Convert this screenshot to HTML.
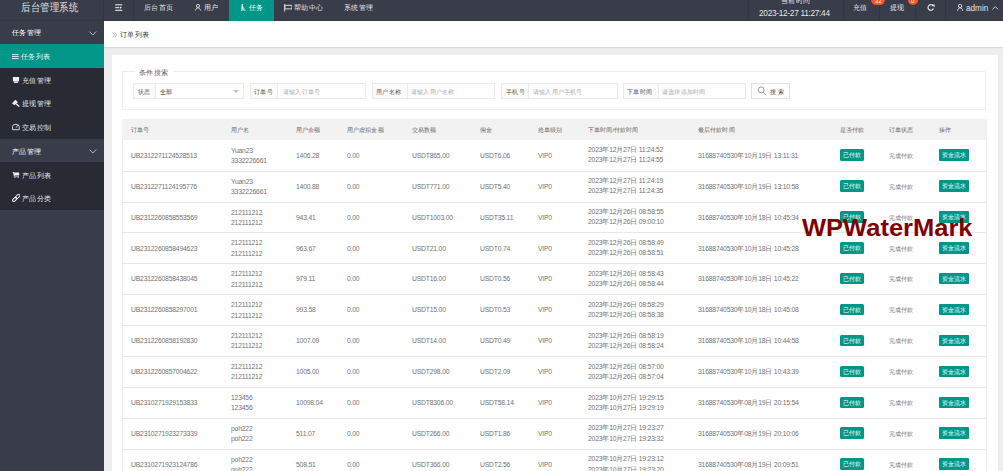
<!DOCTYPE html>
<html><head><meta charset="utf-8"><style>
*{margin:0;padding:0;box-sizing:border-box}
html,body{width:1003px;height:471px;overflow:hidden;background:#eeeeee;font-family:"Liberation Sans",sans-serif;position:relative}
.a{position:absolute;white-space:nowrap}
.z{position:absolute;white-space:nowrap;line-height:1;transform-origin:0 0;transform:scale(.1) translateY(-50%)}
#hdr{position:absolute;left:0;top:0;width:1003px;height:21px;background:#393D49;border-bottom:1px solid #363945}
.vd{position:absolute;top:0;height:21px;width:1px;background:#33363f}
#side{position:absolute;left:0;top:21px;width:104px;height:450px;background:#393D49}
.sg{position:absolute;left:0;width:104px;background:#282B33}
.si{position:absolute;left:0;width:104px}
#bc{position:absolute;left:104px;top:21px;width:899px;height:26px;background:#fff;box-shadow:0 1px 1px rgba(0,0,0,.08)}
#card{position:absolute;left:112px;top:55px;width:886px;height:500px;background:#fff}
#fs{position:absolute;left:122.3px;top:71.4px;width:864px;height:39px;border:1px solid #eee}
.ib{position:absolute;top:83.3px;height:16.2px;border:1px solid #eaeaea;background:#fff}
.il{position:absolute;left:0;top:0;bottom:0;background:#fbfbfb;border-right:1px solid #eaeaea}
.thead{position:absolute;left:122.4px;top:119px;width:863.6px;height:20.7px;background:#f2f2f2}
#tbl{position:absolute;left:122.4px;top:119px;width:864.2px;height:400px;border-left:1px solid #ececec;border-right:1px solid #f0f0f0}
.rline{position:absolute;left:122.4px;width:864.2px;height:1px;background:#e9e9e9}
.badge{position:absolute;width:24.2px;height:11.7px;background:#009688;border-radius:1.5px}
.btn{position:absolute;width:29.6px;height:11.7px;background:#009688;border-radius:1px}
.wm{position:absolute;left:802.2px;top:216.7px;font-family:"Liberation Sans",sans-serif;font-weight:bold;font-size:23.2px;line-height:1;color:#800000;white-space:nowrap;transform:scaleX(1.1);transform-origin:0 0}

</style></head><body>
<div id="hdr">
<div class="z" style="left:21.30px;top:7.25px;font-size:95.0px;color:rgba(255,255,255,.88);font-weight:500;transform:scale(.1,.118) translateY(-50%);">后台管理系统</div>
<div class="vd" style="left:103.3px"></div><div class="vd" style="left:133.3px"></div>
<svg class="a" style="left:114.8px;top:4px" width="8" height="8" viewBox="0 0 8 8"><g fill="#e6e6e6"><rect x="0.2" y="0.3" width="7" height="1.1"/><rect x="0.2" y="3.1" width="4.2" height="1.1"/><path d="M5 2.6 L7.2 3.65 L5 4.7Z"/><rect x="0.2" y="5.8" width="7" height="1.1"/></g></svg>
<div class="z" style="left:143.80px;top:7.00px;font-size:74.0px;color:rgba(255,255,255,.9);font-weight:500;">后台首页</div>
<svg class="a" style="left:195px;top:4.4px" width="7" height="7" viewBox="0 0 7 7"><g fill="none" stroke="#e6e6e6" stroke-width="0.9"><circle cx="3" cy="2" r="1.6"/><path d="M0.5 6.5 C0.9 4.6 1.8 3.9 3 3.9 C4.2 3.9 5.1 4.6 5.5 6.5"/></g></svg>
<div class="z" style="left:204.40px;top:7.00px;font-size:74.0px;color:rgba(255,255,255,.9);font-weight:500;">用户</div>
<div style="position:absolute;left:229.1px;top:0;width:44.5px;height:21px;background:#009688"></div>
<svg class="a" style="left:240px;top:4.2px" width="6" height="7" viewBox="0 0 6 7"><g fill="#e8f5f3"><circle cx="2.3" cy="0.9" r="0.9"/><path d="M1.5 2 L3 2 L3.3 4.2 L4.8 6.8 L4.1 6.9 L2.6 4.8 L2.3 6.9 L1.3 6.9 L1.5 4.2Z"/></g><path d="M3 2.6 L5.6 6.8" stroke="#e8f5f3" stroke-width="0.5"/></svg>
<div class="z" style="left:249.00px;top:7.00px;font-size:74.0px;color:#fff;font-weight:500;">任务</div>
<svg class="a" style="left:283.8px;top:4px" width="8.5" height="7.5" viewBox="0 0 8.5 7.5"><g fill="none" stroke="#e6e6e6" stroke-width="0.9"><path d="M0.6 0 L0.6 7.5"/><rect x="0.9" y="1.3" width="7" height="3.6"/></g></svg>
<div class="z" style="left:294.00px;top:7.00px;font-size:74.0px;color:rgba(255,255,255,.9);font-weight:500;">帮助中心</div>
<div class="z" style="left:343.80px;top:7.00px;font-size:74.0px;color:rgba(255,255,255,.9);font-weight:500;">系统管理</div>
<div class="vd" style="left:747.5px"></div>
<div class="vd" style="left:842.8px"></div>
<div class="vd" style="left:879.3px"></div>
<div class="vd" style="left:915.4px"></div>
<div class="vd" style="left:945.4px"></div>
<div class="z" style="left:780.50px;top:-0.20px;font-size:73.0px;color:rgba(255,255,255,.9);font-weight:500;">当前时间</div>
<div class="z" style="left:758.80px;top:13.30px;font-size:83.0px;color:rgba(255,255,255,.9);letter-spacing:-3.00px;">2023-12-27 11:27:44</div>
<div class="z" style="left:853.00px;top:7.00px;font-size:74.0px;color:rgba(255,255,255,.9);font-weight:500;">充值</div>
<div style="position:absolute;left:871px;top:-5.8px;width:14px;height:11.2px;border-radius:5.6px;background:#FF5722"></div>
<div class="z" style="left:875.00px;top:0.50px;font-size:60.0px;color:#fff;">32</div>
<div class="z" style="left:889.60px;top:7.00px;font-size:74.0px;color:rgba(255,255,255,.9);font-weight:500;">提现</div>
<div style="position:absolute;left:907.8px;top:-5px;width:10.2px;height:10.2px;border-radius:5.1px;background:#FF5722"></div>
<div class="z" style="left:911.30px;top:1.00px;font-size:60.0px;color:#fff;">0</div>
<svg class="a" style="left:926.6px;top:4.2px" width="8" height="7" viewBox="0 0 8 7"><g fill="none" stroke="#e6e6e6" stroke-width="1.2"><path d="M6.3 2.2 A2.8 2.8 0 1 0 6.4 4.6"/></g><path d="M4.6 0.4 L7.6 0.4 L7.6 3.3Z" fill="#e6e6e6"/></svg>
<svg class="a" style="left:957px;top:4.2px" width="7" height="7" viewBox="0 0 7 7"><g fill="none" stroke="#e6e6e6" stroke-width="0.9"><circle cx="3.1" cy="2" r="1.7"/><path d="M0.5 6.8 C0.9 4.8 1.8 3.9 3.1 3.9 C4.4 3.9 5.3 4.8 5.7 6.8"/></g></svg>
<div class="z" style="left:966.00px;top:7.90px;font-size:82.0px;color:rgba(255,255,255,.9);">admin</div>
<svg class="a" style="left:992px;top:6px" width="7" height="4" viewBox="0 0 7 4"><path d="M0.4 3.4 L3.3 0.6 L6.2 3.4" fill="none" stroke="#d6d6d6" stroke-width="0.9"/></svg>
</div>
<div id="side"><div style="position:absolute;left:0;top:-0.7px;width:104px;height:10px">
<div class="z" style="left:12.20px;top:11.40px;font-size:73.0px;color:#fff;font-weight:500;">任务管理</div>
<svg class="a" style="left:88.8px;top:10.6px" width="8" height="5" viewBox="0 0 8 5"><path d="M0.5 0.6 L3.8 4 L7.1 0.6" fill="none" stroke="#d8d8d8" stroke-width="0.8"/></svg>
<div class="sg" style="top:23.6px;height:165.6px"></div>
<div class="si" style="top:23.6px;height:23.9px;background:#009688"></div>
<svg class="a" style="left:11.9px;top:33.6px" width="7" height="6" viewBox="0 0 7 6"><g fill="#f0f0f0"><rect x="0" y="0.2" width="6.6" height="0.9"/><rect x="0" y="2.1" width="6.6" height="0.9"/><rect x="0" y="4" width="6.6" height="0.9"/></g></svg>
<div class="z" style="left:21.20px;top:35.20px;font-size:73.0px;color:#f4f4f4;font-weight:500;">任务列表</div>
<svg class="a" style="left:9px;top:53.7px" width="14" height="14" viewBox="0 0 14 14"><g fill="#f0f0f0"><rect x="3.9" y="3" width="6.2" height="4.4"/><path d="M5.6 7.4 L8.4 7.4 L9.4 9 L4.6 9Z"/></g></svg>
<div class="z" style="left:22.30px;top:59.90px;font-size:73.0px;color:rgba(255,255,255,.92);font-weight:500;">充值管理</div>
<svg class="a" style="left:9px;top:76.7px" width="14" height="14" viewBox="0 0 14 14"><g fill="#f0f0f0"><path d="M3 6.25 L6.55 2.83 L8.93 5.36 L5.36 8.33Z"/><path d="M6.6 7.3 L7.6 6.3 L10.8 9.1 L9.8 10.1Z"/></g></svg>
<div class="z" style="left:22.30px;top:82.50px;font-size:73.0px;color:rgba(255,255,255,.92);font-weight:500;">提现管理</div>
<svg class="a" style="left:9px;top:100.7px" width="14" height="14" viewBox="0 0 14 14"><g fill="none" stroke="#e8e8e8" stroke-width="0.9"><path d="M3.5 8.7 L3.5 5.6 Q3.5 3.3 6.9 3.3 Q10.2 3.3 10.2 5.6 L10.2 8.7 Z"/><path d="M6.7 6.7 L9.2 4.3"/></g></svg>
<div class="z" style="left:22.30px;top:106.80px;font-size:73.0px;color:rgba(255,255,255,.92);font-weight:500;">交易控制</div>
<div class="si" style="top:118.5px;height:23.3px;background:#393D49"></div>
<div class="z" style="left:12.30px;top:130.30px;font-size:73.0px;color:#fff;font-weight:500;">产品管理</div>
<svg class="a" style="left:88.8px;top:128.4px" width="8" height="5" viewBox="0 0 8 5"><path d="M0.5 0.6 L3.8 4 L7.1 0.6" fill="none" stroke="#d8d8d8" stroke-width="0.8"/></svg>
<svg class="a" style="left:9px;top:147.7px" width="14" height="14" viewBox="0 0 14 14"><g fill="#f0f0f0"><path d="M3.3 3.9 L4.8 3.9 L5.2 4.6 L10.2 4.6 L10.2 7.2 L5.6 7.2 L5.6 7.8 L10 7.8 L10 8.5 L4.8 8.5 L4.3 5Z"/><circle cx="6" cy="9.3" r="0.6"/><circle cx="9.1" cy="9.3" r="0.6"/></g></svg>
<div class="z" style="left:21.60px;top:154.40px;font-size:73.0px;color:rgba(255,255,255,.92);font-weight:500;">产品列表</div>
<svg class="a" style="left:11.8px;top:173.8px" width="8.4" height="8" viewBox="0 0 8.4 8"><g fill="none" stroke="#ececec" stroke-width="1"><rect x="0.2" y="4.1" width="5" height="2.6" rx="1.3" transform="rotate(-45 2.7 5.4)"/><rect x="3.2" y="1.2" width="5" height="2.6" rx="1.3" transform="rotate(-45 5.7 2.5)"/></g></svg>
<div class="z" style="left:21.60px;top:177.80px;font-size:73.0px;color:rgba(255,255,255,.92);font-weight:500;">产品分类</div>
</div></div>
<div id="bc"></div>
<svg class="a" style="left:111.9px;top:31.8px" width="6" height="6" viewBox="0 0 6 6"><g fill="none" stroke="#999" stroke-width="0.7"><path d="M0.4 0.6 L2.6 3 L0.4 5.4"/><path d="M2.6 0.6 L4.8 3 L2.6 5.4"/></g></svg>
<div class="z" style="left:120.00px;top:34.30px;font-size:73.0px;color:#333;">订单列表</div>
<div id="card"></div><div id="fs"></div>
<div class="a" style="left:134.6px;top:68px;width:38px;height:8px;background:#fff"></div>
<div class="z" style="left:138.60px;top:71.90px;font-size:73.0px;color:#666;">条件搜索</div>
<div class="ib" style="left:133.4px;width:110.2px"><div class="il" style="width:22px"></div></div>
<div class="z" style="left:138.00px;top:91.90px;font-size:64.0px;color:#555;font-weight:500;">状态</div>
<div class="z" style="left:159.80px;top:91.90px;font-size:62.0px;color:#222;">全部</div>
<div style="position:absolute;left:232.6px;top:89.9px;border-left:3px solid transparent;border-right:3px solid transparent;border-top:3.1px solid #c2c2c2"></div>
<div class="ib" style="left:249.7px;width:116.6px"><div class="il" style="width:27.7px"></div></div>
<div class="z" style="left:254.00px;top:91.90px;font-size:64.0px;color:#555;font-weight:500;">订单号</div>
<div class="z" style="left:282.60px;top:91.90px;font-size:62.0px;color:#aaa;">请输入订单号</div>
<div class="ib" style="left:372px;width:122.6px"><div class="il" style="width:35px"></div></div>
<div class="z" style="left:376.00px;top:91.90px;font-size:64.0px;color:#555;font-weight:500;">用户名称</div>
<div class="z" style="left:411.00px;top:91.90px;font-size:62.0px;color:#aaa;">请输入用户名称</div>
<div class="ib" style="left:500.5px;width:117px"><div class="il" style="width:27.3px"></div></div>
<div class="z" style="left:505.60px;top:91.90px;font-size:64.0px;color:#555;font-weight:500;">手机号</div>
<div class="z" style="left:533.00px;top:91.90px;font-size:62.0px;color:#aaa;">请输入用户手机号</div>
<div class="ib" style="left:622.7px;width:123.1px"><div class="il" style="width:35px"></div></div>
<div class="z" style="left:627.00px;top:91.90px;font-size:64.0px;color:#555;font-weight:500;">下单时间</div>
<div class="z" style="left:661.60px;top:91.90px;font-size:62.0px;color:#aaa;">请选择添加时间</div>
<div class="ib" style="left:751.4px;width:38.2px;border-color:#e2e2e2"></div>
<svg class="a" style="left:757px;top:86.4px" width="10" height="10" viewBox="0 0 10 10"><g fill="none" stroke="#666" stroke-width="0.65"><circle cx="4.2" cy="3.95" r="3.0"/><path d="M6.3 6.1 L8.9 9.1"/></g></svg>
<div class="z" style="left:770.00px;top:91.90px;font-size:62.0px;color:#333;letter-spacing:18.00px;">搜索</div>
<div id="tbl"></div><div class="thead"></div>
<div class="z" style="left:131.40px;top:130.00px;font-size:61.0px;color:#666;font-weight:500;">订单号</div>
<div class="z" style="left:231.30px;top:130.00px;font-size:61.0px;color:#666;font-weight:500;">用户名</div>
<div class="z" style="left:295.50px;top:130.00px;font-size:61.0px;color:#666;font-weight:500;">用户余额</div>
<div class="z" style="left:347.40px;top:130.00px;font-size:61.0px;color:#666;font-weight:500;">用户虚拟金额</div>
<div class="z" style="left:412.40px;top:130.00px;font-size:61.0px;color:#666;font-weight:500;">交易数额</div>
<div class="z" style="left:480.20px;top:130.00px;font-size:61.0px;color:#666;font-weight:500;">佣金</div>
<div class="z" style="left:538.40px;top:130.00px;font-size:61.0px;color:#666;font-weight:500;">抢单级别</div>
<div class="z" style="left:588.00px;top:130.00px;font-size:61.0px;color:#666;font-weight:500;">下单时间/付款时间</div>
<div class="z" style="left:698.00px;top:130.00px;font-size:61.0px;color:#666;font-weight:500;">最后付款时间</div>
<div class="z" style="left:839.60px;top:130.00px;font-size:61.0px;color:#666;font-weight:500;">是否付款</div>
<div class="z" style="left:889.20px;top:130.00px;font-size:61.0px;color:#666;font-weight:500;">订单状态</div>
<div class="z" style="left:939.20px;top:130.00px;font-size:61.0px;color:#666;font-weight:500;">操作</div>
<div class="rline" style="top:170.63px"></div>
<div class="z" style="left:131.40px;top:155.76px;font-size:68.0px;color:#737373;letter-spacing:-2.00px;">UB2312271124528513</div>
<div class="z" style="left:231.30px;top:150.66px;font-size:68.0px;color:#737373;letter-spacing:-2.00px;">Yuan23</div>
<div class="z" style="left:231.30px;top:160.86px;font-size:68.0px;color:#737373;letter-spacing:-2.00px;">3332226661</div>
<div class="z" style="left:295.50px;top:155.76px;font-size:68.0px;color:#737373;letter-spacing:-2.00px;">1406.28</div>
<div class="z" style="left:347.40px;top:155.76px;font-size:68.0px;color:#737373;letter-spacing:-2.00px;">0.00</div>
<div class="z" style="left:412.40px;top:155.76px;font-size:68.0px;color:#737373;letter-spacing:-2.00px;">USDT865.00</div>
<div class="z" style="left:480.20px;top:155.76px;font-size:68.0px;color:#737373;letter-spacing:-2.00px;">USDT6.06</div>
<div class="z" style="left:538.40px;top:155.76px;font-size:68.0px;color:#737373;letter-spacing:-2.00px;">VIP0</div>
<div class="z" style="left:588.00px;top:150.06px;font-size:68.0px;color:#737373;letter-spacing:-2.00px;">2023<span style="font-size:68.0px;letter-spacing:0;font-weight:500">年</span>12<span style="font-size:68.0px;letter-spacing:0;font-weight:500">月</span>27<span style="font-size:68.0px;letter-spacing:0;font-weight:500">日</span> 11:24:52</div>
<div class="z" style="left:588.00px;top:160.36px;font-size:68.0px;color:#737373;letter-spacing:-2.00px;">2023<span style="font-size:68.0px;letter-spacing:0;font-weight:500">年</span>12<span style="font-size:68.0px;letter-spacing:0;font-weight:500">月</span>27<span style="font-size:68.0px;letter-spacing:0;font-weight:500">日</span> 11:24:55</div>
<div class="z" style="left:698.00px;top:155.76px;font-size:68.0px;color:#737373;letter-spacing:-2.00px;">31688740530<span style="font-size:68.0px;letter-spacing:0;font-weight:500">年</span>10<span style="font-size:68.0px;letter-spacing:0;font-weight:500">月</span>19<span style="font-size:68.0px;letter-spacing:0;font-weight:500">日</span> 13:11:31</div>
<div class="badge" style="left:839.5px;top:149.06px"></div>
<div class="z" style="left:842.60px;top:155.06px;font-size:61.0px;color:#fff;font-weight:500;">已付款</div>
<div class="z" style="left:889.20px;top:155.76px;font-size:61.0px;color:#737373;font-weight:500;">完成付款</div>
<div class="btn" style="left:939.2px;top:149.06px"></div>
<div class="z" style="left:942.20px;top:155.06px;font-size:60.0px;color:#fff;font-weight:500;">资金流水</div>
<div class="rline" style="top:201.56px"></div>
<div class="z" style="left:131.40px;top:186.69px;font-size:68.0px;color:#737373;letter-spacing:-2.00px;">UB2312271124195776</div>
<div class="z" style="left:231.30px;top:181.59px;font-size:68.0px;color:#737373;letter-spacing:-2.00px;">Yuan23</div>
<div class="z" style="left:231.30px;top:191.79px;font-size:68.0px;color:#737373;letter-spacing:-2.00px;">3332226661</div>
<div class="z" style="left:295.50px;top:186.69px;font-size:68.0px;color:#737373;letter-spacing:-2.00px;">1400.88</div>
<div class="z" style="left:347.40px;top:186.69px;font-size:68.0px;color:#737373;letter-spacing:-2.00px;">0.00</div>
<div class="z" style="left:412.40px;top:186.69px;font-size:68.0px;color:#737373;letter-spacing:-2.00px;">USDT771.00</div>
<div class="z" style="left:480.20px;top:186.69px;font-size:68.0px;color:#737373;letter-spacing:-2.00px;">USDT5.40</div>
<div class="z" style="left:538.40px;top:186.69px;font-size:68.0px;color:#737373;letter-spacing:-2.00px;">VIP0</div>
<div class="z" style="left:588.00px;top:181.00px;font-size:68.0px;color:#737373;letter-spacing:-2.00px;">2023<span style="font-size:68.0px;letter-spacing:0;font-weight:500">年</span>12<span style="font-size:68.0px;letter-spacing:0;font-weight:500">月</span>27<span style="font-size:68.0px;letter-spacing:0;font-weight:500">日</span> 11:24:19</div>
<div class="z" style="left:588.00px;top:191.29px;font-size:68.0px;color:#737373;letter-spacing:-2.00px;">2023<span style="font-size:68.0px;letter-spacing:0;font-weight:500">年</span>12<span style="font-size:68.0px;letter-spacing:0;font-weight:500">月</span>27<span style="font-size:68.0px;letter-spacing:0;font-weight:500">日</span> 11:24:35</div>
<div class="z" style="left:698.00px;top:186.69px;font-size:68.0px;color:#737373;letter-spacing:-2.00px;">31688740530<span style="font-size:68.0px;letter-spacing:0;font-weight:500">年</span>10<span style="font-size:68.0px;letter-spacing:0;font-weight:500">月</span>19<span style="font-size:68.0px;letter-spacing:0;font-weight:500">日</span> 13:10:58</div>
<div class="badge" style="left:839.5px;top:180.00px"></div>
<div class="z" style="left:842.60px;top:186.00px;font-size:61.0px;color:#fff;font-weight:500;">已付款</div>
<div class="z" style="left:889.20px;top:186.69px;font-size:61.0px;color:#737373;font-weight:500;">完成付款</div>
<div class="btn" style="left:939.2px;top:180.00px"></div>
<div class="z" style="left:942.20px;top:186.00px;font-size:60.0px;color:#fff;font-weight:500;">资金流水</div>
<div class="rline" style="top:232.49px"></div>
<div class="z" style="left:131.40px;top:217.62px;font-size:68.0px;color:#737373;letter-spacing:-2.00px;">UB2312260858553569</div>
<div class="z" style="left:231.30px;top:212.53px;font-size:68.0px;color:#737373;letter-spacing:-2.00px;">212111212</div>
<div class="z" style="left:231.30px;top:222.72px;font-size:68.0px;color:#737373;letter-spacing:-2.00px;">212111212</div>
<div class="z" style="left:295.50px;top:217.62px;font-size:68.0px;color:#737373;letter-spacing:-2.00px;">943.41</div>
<div class="z" style="left:347.40px;top:217.62px;font-size:68.0px;color:#737373;letter-spacing:-2.00px;">0.00</div>
<div class="z" style="left:412.40px;top:217.62px;font-size:68.0px;color:#737373;letter-spacing:-2.00px;">USDT1003.00</div>
<div class="z" style="left:480.20px;top:217.62px;font-size:68.0px;color:#737373;letter-spacing:-2.00px;">USDT35.11</div>
<div class="z" style="left:538.40px;top:217.62px;font-size:68.0px;color:#737373;letter-spacing:-2.00px;">VIP0</div>
<div class="z" style="left:588.00px;top:211.93px;font-size:68.0px;color:#737373;letter-spacing:-2.00px;">2023<span style="font-size:68.0px;letter-spacing:0;font-weight:500">年</span>12<span style="font-size:68.0px;letter-spacing:0;font-weight:500">月</span>26<span style="font-size:68.0px;letter-spacing:0;font-weight:500">日</span> 08:58:55</div>
<div class="z" style="left:588.00px;top:222.22px;font-size:68.0px;color:#737373;letter-spacing:-2.00px;">2023<span style="font-size:68.0px;letter-spacing:0;font-weight:500">年</span>12<span style="font-size:68.0px;letter-spacing:0;font-weight:500">月</span>26<span style="font-size:68.0px;letter-spacing:0;font-weight:500">日</span> 09:00:10</div>
<div class="z" style="left:698.00px;top:217.62px;font-size:68.0px;color:#737373;letter-spacing:-2.00px;">31688740530<span style="font-size:68.0px;letter-spacing:0;font-weight:500">年</span>10<span style="font-size:68.0px;letter-spacing:0;font-weight:500">月</span>18<span style="font-size:68.0px;letter-spacing:0;font-weight:500">日</span> 10:45:34</div>
<div class="badge" style="left:839.5px;top:210.93px"></div>
<div class="z" style="left:842.60px;top:216.93px;font-size:61.0px;color:#fff;font-weight:500;">已付款</div>
<div class="z" style="left:889.20px;top:217.62px;font-size:61.0px;color:#737373;font-weight:500;">完成付款</div>
<div class="btn" style="left:939.2px;top:210.93px"></div>
<div class="z" style="left:942.20px;top:216.93px;font-size:60.0px;color:#fff;font-weight:500;">资金流水</div>
<div class="rline" style="top:263.42px"></div>
<div class="z" style="left:131.40px;top:248.55px;font-size:68.0px;color:#737373;letter-spacing:-2.00px;">UB2312260858494623</div>
<div class="z" style="left:231.30px;top:243.45px;font-size:68.0px;color:#737373;letter-spacing:-2.00px;">212111212</div>
<div class="z" style="left:231.30px;top:253.65px;font-size:68.0px;color:#737373;letter-spacing:-2.00px;">212111212</div>
<div class="z" style="left:295.50px;top:248.55px;font-size:68.0px;color:#737373;letter-spacing:-2.00px;">963.67</div>
<div class="z" style="left:347.40px;top:248.55px;font-size:68.0px;color:#737373;letter-spacing:-2.00px;">0.00</div>
<div class="z" style="left:412.40px;top:248.55px;font-size:68.0px;color:#737373;letter-spacing:-2.00px;">USDT21.00</div>
<div class="z" style="left:480.20px;top:248.55px;font-size:68.0px;color:#737373;letter-spacing:-2.00px;">USDT0.74</div>
<div class="z" style="left:538.40px;top:248.55px;font-size:68.0px;color:#737373;letter-spacing:-2.00px;">VIP0</div>
<div class="z" style="left:588.00px;top:242.85px;font-size:68.0px;color:#737373;letter-spacing:-2.00px;">2023<span style="font-size:68.0px;letter-spacing:0;font-weight:500">年</span>12<span style="font-size:68.0px;letter-spacing:0;font-weight:500">月</span>26<span style="font-size:68.0px;letter-spacing:0;font-weight:500">日</span> 08:58:49</div>
<div class="z" style="left:588.00px;top:253.15px;font-size:68.0px;color:#737373;letter-spacing:-2.00px;">2023<span style="font-size:68.0px;letter-spacing:0;font-weight:500">年</span>12<span style="font-size:68.0px;letter-spacing:0;font-weight:500">月</span>26<span style="font-size:68.0px;letter-spacing:0;font-weight:500">日</span> 08:58:51</div>
<div class="z" style="left:698.00px;top:248.55px;font-size:68.0px;color:#737373;letter-spacing:-2.00px;">31688740530<span style="font-size:68.0px;letter-spacing:0;font-weight:500">年</span>10<span style="font-size:68.0px;letter-spacing:0;font-weight:500">月</span>18<span style="font-size:68.0px;letter-spacing:0;font-weight:500">日</span> 10:45:28</div>
<div class="badge" style="left:839.5px;top:241.85px"></div>
<div class="z" style="left:842.60px;top:247.85px;font-size:61.0px;color:#fff;font-weight:500;">已付款</div>
<div class="z" style="left:889.20px;top:248.55px;font-size:61.0px;color:#737373;font-weight:500;">完成付款</div>
<div class="btn" style="left:939.2px;top:241.85px"></div>
<div class="z" style="left:942.20px;top:247.85px;font-size:60.0px;color:#fff;font-weight:500;">资金流水</div>
<div class="rline" style="top:294.35px"></div>
<div class="z" style="left:131.40px;top:279.48px;font-size:68.0px;color:#737373;letter-spacing:-2.00px;">UB2312260858438045</div>
<div class="z" style="left:231.30px;top:274.38px;font-size:68.0px;color:#737373;letter-spacing:-2.00px;">212111212</div>
<div class="z" style="left:231.30px;top:284.58px;font-size:68.0px;color:#737373;letter-spacing:-2.00px;">212111212</div>
<div class="z" style="left:295.50px;top:279.48px;font-size:68.0px;color:#737373;letter-spacing:-2.00px;">979.11</div>
<div class="z" style="left:347.40px;top:279.48px;font-size:68.0px;color:#737373;letter-spacing:-2.00px;">0.00</div>
<div class="z" style="left:412.40px;top:279.48px;font-size:68.0px;color:#737373;letter-spacing:-2.00px;">USDT16.00</div>
<div class="z" style="left:480.20px;top:279.48px;font-size:68.0px;color:#737373;letter-spacing:-2.00px;">USDT0.56</div>
<div class="z" style="left:538.40px;top:279.48px;font-size:68.0px;color:#737373;letter-spacing:-2.00px;">VIP0</div>
<div class="z" style="left:588.00px;top:273.78px;font-size:68.0px;color:#737373;letter-spacing:-2.00px;">2023<span style="font-size:68.0px;letter-spacing:0;font-weight:500">年</span>12<span style="font-size:68.0px;letter-spacing:0;font-weight:500">月</span>26<span style="font-size:68.0px;letter-spacing:0;font-weight:500">日</span> 08:58:43</div>
<div class="z" style="left:588.00px;top:284.08px;font-size:68.0px;color:#737373;letter-spacing:-2.00px;">2023<span style="font-size:68.0px;letter-spacing:0;font-weight:500">年</span>12<span style="font-size:68.0px;letter-spacing:0;font-weight:500">月</span>26<span style="font-size:68.0px;letter-spacing:0;font-weight:500">日</span> 08:58:44</div>
<div class="z" style="left:698.00px;top:279.48px;font-size:68.0px;color:#737373;letter-spacing:-2.00px;">31688740530<span style="font-size:68.0px;letter-spacing:0;font-weight:500">年</span>10<span style="font-size:68.0px;letter-spacing:0;font-weight:500">月</span>18<span style="font-size:68.0px;letter-spacing:0;font-weight:500">日</span> 10:45:22</div>
<div class="badge" style="left:839.5px;top:272.78px"></div>
<div class="z" style="left:842.60px;top:278.78px;font-size:61.0px;color:#fff;font-weight:500;">已付款</div>
<div class="z" style="left:889.20px;top:279.48px;font-size:61.0px;color:#737373;font-weight:500;">完成付款</div>
<div class="btn" style="left:939.2px;top:272.78px"></div>
<div class="z" style="left:942.20px;top:278.78px;font-size:60.0px;color:#fff;font-weight:500;">资金流水</div>
<div class="rline" style="top:325.28px"></div>
<div class="z" style="left:131.40px;top:310.42px;font-size:68.0px;color:#737373;letter-spacing:-2.00px;">UB2312260858297001</div>
<div class="z" style="left:231.30px;top:305.31px;font-size:68.0px;color:#737373;letter-spacing:-2.00px;">212111212</div>
<div class="z" style="left:231.30px;top:315.52px;font-size:68.0px;color:#737373;letter-spacing:-2.00px;">212111212</div>
<div class="z" style="left:295.50px;top:310.42px;font-size:68.0px;color:#737373;letter-spacing:-2.00px;">993.58</div>
<div class="z" style="left:347.40px;top:310.42px;font-size:68.0px;color:#737373;letter-spacing:-2.00px;">0.00</div>
<div class="z" style="left:412.40px;top:310.42px;font-size:68.0px;color:#737373;letter-spacing:-2.00px;">USDT15.00</div>
<div class="z" style="left:480.20px;top:310.42px;font-size:68.0px;color:#737373;letter-spacing:-2.00px;">USDT0.53</div>
<div class="z" style="left:538.40px;top:310.42px;font-size:68.0px;color:#737373;letter-spacing:-2.00px;">VIP0</div>
<div class="z" style="left:588.00px;top:304.72px;font-size:68.0px;color:#737373;letter-spacing:-2.00px;">2023<span style="font-size:68.0px;letter-spacing:0;font-weight:500">年</span>12<span style="font-size:68.0px;letter-spacing:0;font-weight:500">月</span>26<span style="font-size:68.0px;letter-spacing:0;font-weight:500">日</span> 08:58:29</div>
<div class="z" style="left:588.00px;top:315.02px;font-size:68.0px;color:#737373;letter-spacing:-2.00px;">2023<span style="font-size:68.0px;letter-spacing:0;font-weight:500">年</span>12<span style="font-size:68.0px;letter-spacing:0;font-weight:500">月</span>26<span style="font-size:68.0px;letter-spacing:0;font-weight:500">日</span> 08:58:38</div>
<div class="z" style="left:698.00px;top:310.42px;font-size:68.0px;color:#737373;letter-spacing:-2.00px;">31688740530<span style="font-size:68.0px;letter-spacing:0;font-weight:500">年</span>10<span style="font-size:68.0px;letter-spacing:0;font-weight:500">月</span>18<span style="font-size:68.0px;letter-spacing:0;font-weight:500">日</span> 10:45:08</div>
<div class="badge" style="left:839.5px;top:303.72px"></div>
<div class="z" style="left:842.60px;top:309.72px;font-size:61.0px;color:#fff;font-weight:500;">已付款</div>
<div class="z" style="left:889.20px;top:310.42px;font-size:61.0px;color:#737373;font-weight:500;">完成付款</div>
<div class="btn" style="left:939.2px;top:303.72px"></div>
<div class="z" style="left:942.20px;top:309.72px;font-size:60.0px;color:#fff;font-weight:500;">资金流水</div>
<div class="rline" style="top:356.21px"></div>
<div class="z" style="left:131.40px;top:341.34px;font-size:68.0px;color:#737373;letter-spacing:-2.00px;">UB2312260858192830</div>
<div class="z" style="left:231.30px;top:336.24px;font-size:68.0px;color:#737373;letter-spacing:-2.00px;">212111212</div>
<div class="z" style="left:231.30px;top:346.44px;font-size:68.0px;color:#737373;letter-spacing:-2.00px;">212111212</div>
<div class="z" style="left:295.50px;top:341.34px;font-size:68.0px;color:#737373;letter-spacing:-2.00px;">1007.09</div>
<div class="z" style="left:347.40px;top:341.34px;font-size:68.0px;color:#737373;letter-spacing:-2.00px;">0.00</div>
<div class="z" style="left:412.40px;top:341.34px;font-size:68.0px;color:#737373;letter-spacing:-2.00px;">USDT14.00</div>
<div class="z" style="left:480.20px;top:341.34px;font-size:68.0px;color:#737373;letter-spacing:-2.00px;">USDT0.49</div>
<div class="z" style="left:538.40px;top:341.34px;font-size:68.0px;color:#737373;letter-spacing:-2.00px;">VIP0</div>
<div class="z" style="left:588.00px;top:335.64px;font-size:68.0px;color:#737373;letter-spacing:-2.00px;">2023<span style="font-size:68.0px;letter-spacing:0;font-weight:500">年</span>12<span style="font-size:68.0px;letter-spacing:0;font-weight:500">月</span>26<span style="font-size:68.0px;letter-spacing:0;font-weight:500">日</span> 08:58:19</div>
<div class="z" style="left:588.00px;top:345.94px;font-size:68.0px;color:#737373;letter-spacing:-2.00px;">2023<span style="font-size:68.0px;letter-spacing:0;font-weight:500">年</span>12<span style="font-size:68.0px;letter-spacing:0;font-weight:500">月</span>26<span style="font-size:68.0px;letter-spacing:0;font-weight:500">日</span> 08:58:24</div>
<div class="z" style="left:698.00px;top:341.34px;font-size:68.0px;color:#737373;letter-spacing:-2.00px;">31688740530<span style="font-size:68.0px;letter-spacing:0;font-weight:500">年</span>10<span style="font-size:68.0px;letter-spacing:0;font-weight:500">月</span>18<span style="font-size:68.0px;letter-spacing:0;font-weight:500">日</span> 10:44:58</div>
<div class="badge" style="left:839.5px;top:334.64px"></div>
<div class="z" style="left:842.60px;top:340.64px;font-size:61.0px;color:#fff;font-weight:500;">已付款</div>
<div class="z" style="left:889.20px;top:341.34px;font-size:61.0px;color:#737373;font-weight:500;">完成付款</div>
<div class="btn" style="left:939.2px;top:334.64px"></div>
<div class="z" style="left:942.20px;top:340.64px;font-size:60.0px;color:#fff;font-weight:500;">资金流水</div>
<div class="rline" style="top:387.14px"></div>
<div class="z" style="left:131.40px;top:372.27px;font-size:68.0px;color:#737373;letter-spacing:-2.00px;">UB2312260857004622</div>
<div class="z" style="left:231.30px;top:367.17px;font-size:68.0px;color:#737373;letter-spacing:-2.00px;">212111212</div>
<div class="z" style="left:231.30px;top:377.38px;font-size:68.0px;color:#737373;letter-spacing:-2.00px;">212111212</div>
<div class="z" style="left:295.50px;top:372.27px;font-size:68.0px;color:#737373;letter-spacing:-2.00px;">1005.00</div>
<div class="z" style="left:347.40px;top:372.27px;font-size:68.0px;color:#737373;letter-spacing:-2.00px;">0.00</div>
<div class="z" style="left:412.40px;top:372.27px;font-size:68.0px;color:#737373;letter-spacing:-2.00px;">USDT298.00</div>
<div class="z" style="left:480.20px;top:372.27px;font-size:68.0px;color:#737373;letter-spacing:-2.00px;">USDT2.09</div>
<div class="z" style="left:538.40px;top:372.27px;font-size:68.0px;color:#737373;letter-spacing:-2.00px;">VIP0</div>
<div class="z" style="left:588.00px;top:366.57px;font-size:68.0px;color:#737373;letter-spacing:-2.00px;">2023<span style="font-size:68.0px;letter-spacing:0;font-weight:500">年</span>12<span style="font-size:68.0px;letter-spacing:0;font-weight:500">月</span>26<span style="font-size:68.0px;letter-spacing:0;font-weight:500">日</span> 08:57:00</div>
<div class="z" style="left:588.00px;top:376.88px;font-size:68.0px;color:#737373;letter-spacing:-2.00px;">2023<span style="font-size:68.0px;letter-spacing:0;font-weight:500">年</span>12<span style="font-size:68.0px;letter-spacing:0;font-weight:500">月</span>26<span style="font-size:68.0px;letter-spacing:0;font-weight:500">日</span> 08:57:04</div>
<div class="z" style="left:698.00px;top:372.27px;font-size:68.0px;color:#737373;letter-spacing:-2.00px;">31688740530<span style="font-size:68.0px;letter-spacing:0;font-weight:500">年</span>10<span style="font-size:68.0px;letter-spacing:0;font-weight:500">月</span>18<span style="font-size:68.0px;letter-spacing:0;font-weight:500">日</span> 10:43:39</div>
<div class="badge" style="left:839.5px;top:365.57px"></div>
<div class="z" style="left:842.60px;top:371.57px;font-size:61.0px;color:#fff;font-weight:500;">已付款</div>
<div class="z" style="left:889.20px;top:372.27px;font-size:61.0px;color:#737373;font-weight:500;">完成付款</div>
<div class="btn" style="left:939.2px;top:365.57px"></div>
<div class="z" style="left:942.20px;top:371.57px;font-size:60.0px;color:#fff;font-weight:500;">资金流水</div>
<div class="rline" style="top:418.07px"></div>
<div class="z" style="left:131.40px;top:403.20px;font-size:68.0px;color:#737373;letter-spacing:-2.00px;">UB2310271929153833</div>
<div class="z" style="left:231.30px;top:398.10px;font-size:68.0px;color:#737373;letter-spacing:-2.00px;">123456</div>
<div class="z" style="left:231.30px;top:408.31px;font-size:68.0px;color:#737373;letter-spacing:-2.00px;">123456</div>
<div class="z" style="left:295.50px;top:403.20px;font-size:68.0px;color:#737373;letter-spacing:-2.00px;">10098.04</div>
<div class="z" style="left:347.40px;top:403.20px;font-size:68.0px;color:#737373;letter-spacing:-2.00px;">0.00</div>
<div class="z" style="left:412.40px;top:403.20px;font-size:68.0px;color:#737373;letter-spacing:-2.00px;">USDT8306.00</div>
<div class="z" style="left:480.20px;top:403.20px;font-size:68.0px;color:#737373;letter-spacing:-2.00px;">USDT58.14</div>
<div class="z" style="left:538.40px;top:403.20px;font-size:68.0px;color:#737373;letter-spacing:-2.00px;">VIP0</div>
<div class="z" style="left:588.00px;top:397.50px;font-size:68.0px;color:#737373;letter-spacing:-2.00px;">2023<span style="font-size:68.0px;letter-spacing:0;font-weight:500">年</span>10<span style="font-size:68.0px;letter-spacing:0;font-weight:500">月</span>27<span style="font-size:68.0px;letter-spacing:0;font-weight:500">日</span> 19:29:15</div>
<div class="z" style="left:588.00px;top:407.81px;font-size:68.0px;color:#737373;letter-spacing:-2.00px;">2023<span style="font-size:68.0px;letter-spacing:0;font-weight:500">年</span>10<span style="font-size:68.0px;letter-spacing:0;font-weight:500">月</span>27<span style="font-size:68.0px;letter-spacing:0;font-weight:500">日</span> 19:29:19</div>
<div class="z" style="left:698.00px;top:403.20px;font-size:68.0px;color:#737373;letter-spacing:-2.00px;">31688740530<span style="font-size:68.0px;letter-spacing:0;font-weight:500">年</span>08<span style="font-size:68.0px;letter-spacing:0;font-weight:500">月</span>19<span style="font-size:68.0px;letter-spacing:0;font-weight:500">日</span> 20:15:54</div>
<div class="badge" style="left:839.5px;top:396.50px"></div>
<div class="z" style="left:842.60px;top:402.50px;font-size:61.0px;color:#fff;font-weight:500;">已付款</div>
<div class="z" style="left:889.20px;top:403.20px;font-size:61.0px;color:#737373;font-weight:500;">完成付款</div>
<div class="btn" style="left:939.2px;top:396.50px"></div>
<div class="z" style="left:942.20px;top:402.50px;font-size:60.0px;color:#fff;font-weight:500;">资金流水</div>
<div class="rline" style="top:449.00px"></div>
<div class="z" style="left:131.40px;top:434.13px;font-size:68.0px;color:#737373;letter-spacing:-2.00px;">UB2310271923273339</div>
<div class="z" style="left:231.30px;top:429.03px;font-size:68.0px;color:#737373;letter-spacing:-2.00px;">poh222</div>
<div class="z" style="left:231.30px;top:439.24px;font-size:68.0px;color:#737373;letter-spacing:-2.00px;">poh222</div>
<div class="z" style="left:295.50px;top:434.13px;font-size:68.0px;color:#737373;letter-spacing:-2.00px;">511.07</div>
<div class="z" style="left:347.40px;top:434.13px;font-size:68.0px;color:#737373;letter-spacing:-2.00px;">0.00</div>
<div class="z" style="left:412.40px;top:434.13px;font-size:68.0px;color:#737373;letter-spacing:-2.00px;">USDT266.00</div>
<div class="z" style="left:480.20px;top:434.13px;font-size:68.0px;color:#737373;letter-spacing:-2.00px;">USDT1.86</div>
<div class="z" style="left:538.40px;top:434.13px;font-size:68.0px;color:#737373;letter-spacing:-2.00px;">VIP0</div>
<div class="z" style="left:588.00px;top:428.44px;font-size:68.0px;color:#737373;letter-spacing:-2.00px;">2023<span style="font-size:68.0px;letter-spacing:0;font-weight:500">年</span>10<span style="font-size:68.0px;letter-spacing:0;font-weight:500">月</span>27<span style="font-size:68.0px;letter-spacing:0;font-weight:500">日</span> 19:23:27</div>
<div class="z" style="left:588.00px;top:438.74px;font-size:68.0px;color:#737373;letter-spacing:-2.00px;">2023<span style="font-size:68.0px;letter-spacing:0;font-weight:500">年</span>10<span style="font-size:68.0px;letter-spacing:0;font-weight:500">月</span>27<span style="font-size:68.0px;letter-spacing:0;font-weight:500">日</span> 19:23:32</div>
<div class="z" style="left:698.00px;top:434.13px;font-size:68.0px;color:#737373;letter-spacing:-2.00px;">31688740530<span style="font-size:68.0px;letter-spacing:0;font-weight:500">年</span>08<span style="font-size:68.0px;letter-spacing:0;font-weight:500">月</span>19<span style="font-size:68.0px;letter-spacing:0;font-weight:500">日</span> 20:10:06</div>
<div class="badge" style="left:839.5px;top:427.44px"></div>
<div class="z" style="left:842.60px;top:433.44px;font-size:61.0px;color:#fff;font-weight:500;">已付款</div>
<div class="z" style="left:889.20px;top:434.13px;font-size:61.0px;color:#737373;font-weight:500;">完成付款</div>
<div class="btn" style="left:939.2px;top:427.44px"></div>
<div class="z" style="left:942.20px;top:433.44px;font-size:60.0px;color:#fff;font-weight:500;">资金流水</div>
<div class="rline" style="top:479.93px"></div>
<div class="z" style="left:131.40px;top:465.06px;font-size:68.0px;color:#737373;letter-spacing:-2.00px;">UB2310271923124786</div>
<div class="z" style="left:231.30px;top:459.96px;font-size:68.0px;color:#737373;letter-spacing:-2.00px;">poh222</div>
<div class="z" style="left:231.30px;top:470.17px;font-size:68.0px;color:#737373;letter-spacing:-2.00px;">poh222</div>
<div class="z" style="left:295.50px;top:465.06px;font-size:68.0px;color:#737373;letter-spacing:-2.00px;">508.51</div>
<div class="z" style="left:347.40px;top:465.06px;font-size:68.0px;color:#737373;letter-spacing:-2.00px;">0.00</div>
<div class="z" style="left:412.40px;top:465.06px;font-size:68.0px;color:#737373;letter-spacing:-2.00px;">USDT366.00</div>
<div class="z" style="left:480.20px;top:465.06px;font-size:68.0px;color:#737373;letter-spacing:-2.00px;">USDT2.56</div>
<div class="z" style="left:538.40px;top:465.06px;font-size:68.0px;color:#737373;letter-spacing:-2.00px;">VIP0</div>
<div class="z" style="left:588.00px;top:459.37px;font-size:68.0px;color:#737373;letter-spacing:-2.00px;">2023<span style="font-size:68.0px;letter-spacing:0;font-weight:500">年</span>10<span style="font-size:68.0px;letter-spacing:0;font-weight:500">月</span>27<span style="font-size:68.0px;letter-spacing:0;font-weight:500">日</span> 19:23:12</div>
<div class="z" style="left:588.00px;top:469.67px;font-size:68.0px;color:#737373;letter-spacing:-2.00px;">2023<span style="font-size:68.0px;letter-spacing:0;font-weight:500">年</span>10<span style="font-size:68.0px;letter-spacing:0;font-weight:500">月</span>27<span style="font-size:68.0px;letter-spacing:0;font-weight:500">日</span> 19:23:20</div>
<div class="z" style="left:698.00px;top:465.06px;font-size:68.0px;color:#737373;letter-spacing:-2.00px;">31688740530<span style="font-size:68.0px;letter-spacing:0;font-weight:500">年</span>08<span style="font-size:68.0px;letter-spacing:0;font-weight:500">月</span>19<span style="font-size:68.0px;letter-spacing:0;font-weight:500">日</span> 20:09:51</div>
<div class="badge" style="left:839.5px;top:458.37px"></div>
<div class="z" style="left:842.60px;top:464.37px;font-size:61.0px;color:#fff;font-weight:500;">已付款</div>
<div class="z" style="left:889.20px;top:465.06px;font-size:61.0px;color:#737373;font-weight:500;">完成付款</div>
<div class="btn" style="left:939.2px;top:458.37px"></div>
<div class="z" style="left:942.20px;top:464.37px;font-size:60.0px;color:#fff;font-weight:500;">资金流水</div>
<div class="wm">WPWaterMark</div>
</body></html>
